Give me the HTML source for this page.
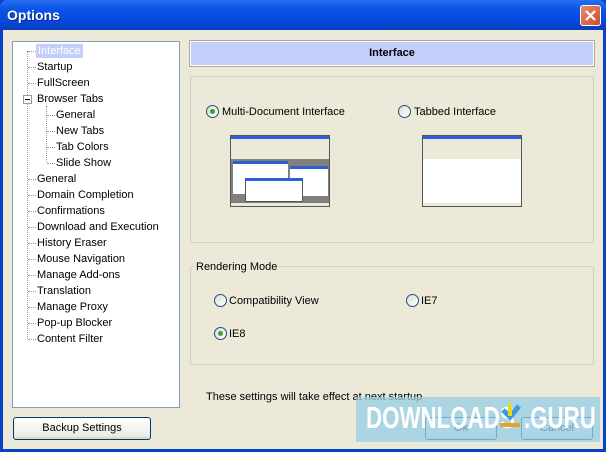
<!DOCTYPE html>
<html><head><style>
*{margin:0;padding:0;box-sizing:border-box}
body{width:606px;height:452px;overflow:hidden;background:#0841c6;font-family:"Liberation Sans",sans-serif;font-size:11px;color:#000;position:relative}
.a{position:absolute}
#title{left:0;top:0;width:606px;height:30px;background:linear-gradient(#2a6ef0,#0a55e6 30%,#0546d8 80%,#0a3cb8);border-radius:7px 7px 0 0}
#title span{position:absolute;left:7px;top:7px;color:#fff;font-weight:bold;font-size:14px;text-shadow:1px 1px #0a2a80}
#close{left:580px;top:5px;width:21px;height:21px;background:linear-gradient(135deg,#e88a6c,#c9502c);border:1px solid #fff;border-radius:3px}
#body{left:3px;top:30px;width:600px;height:419px;background:#ece9d8}
#tree{left:12px;top:41px;width:168px;height:367px;background:#fff;border:1px solid #7f9db9}
.t{position:absolute;white-space:nowrap;line-height:14px}
.dot{position:absolute;border-top:1px dotted #999;height:0}
.vdot{position:absolute;border-left:1px dotted #999;width:0}
#hdr{left:190px;top:41px;width:404px;height:25px;background:#c3cef9;border:1px solid #fff;outline:1px solid #aca899;text-align:center;font-weight:bold;line-height:23px}
.grp{border:1px solid #d0d0bf;border-radius:2px}
.r{position:absolute;width:13px;height:13px;border-radius:50%;border:1px solid #1c5180;background:linear-gradient(135deg,#dcdcd6,#fff)}
.r.on::after{content:"";position:absolute;left:3px;top:3px;width:5px;height:5px;border-radius:50%;background:#3ea12f}
.btn{position:absolute;height:23px;border:1px solid #003c74;border-radius:3px;background:linear-gradient(#fff,#ecebe6 85%,#d6d0c5);text-align:center;line-height:21px}
.shot{position:absolute;width:100px;height:72px;border:1px solid #555;background:#fff}
.wm{position:absolute;white-space:nowrap;color:#fff;font-weight:bold;font-size:31px;line-height:34px;transform:scaleX(0.72);transform-origin:0 0}
</style></head><body>
<div id="title" class="a"><span>Options</span></div>
<div id="close" class="a"><svg width="19" height="19"><path d="M5 5L14 14M14 5L5 14" stroke="#fff" stroke-width="2.2"/></svg></div>
<div id="body" class="a"></div>

<div id="tree" class="a">
<div class="vdot" style="left:14px;top:9px;height:288px"></div>
<div class="vdot" style="left:33px;top:64px;height:56px"></div>
<div class="t" style="left:23px;top:2px;background:#c3cef9;color:#fff;padding:0 2px">Interface</div>
<div class="dot" style="left:15px;top:9px;width:8px"></div>
<div class="t" style="left:24px;top:18px">Startup</div><div class="dot" style="left:15px;top:25px;width:8px"></div>
<div class="t" style="left:24px;top:34px">FullScreen</div><div class="dot" style="left:15px;top:41px;width:8px"></div>
<div class="a" style="left:10px;top:53px;width:9px;height:9px;border:1px solid #919b9c;background:#fff"><div class="a" style="left:1px;top:3px;width:5px;height:1px;background:#000"></div></div>
<div class="t" style="left:24px;top:50px">Browser Tabs</div>
<div class="t" style="left:43px;top:66px">General</div><div class="dot" style="left:34px;top:73px;width:8px"></div>
<div class="t" style="left:43px;top:82px">New Tabs</div><div class="dot" style="left:34px;top:89px;width:8px"></div>
<div class="t" style="left:43px;top:98px">Tab Colors</div><div class="dot" style="left:34px;top:105px;width:8px"></div>
<div class="t" style="left:43px;top:114px">Slide Show</div><div class="dot" style="left:34px;top:121px;width:8px"></div>
<div class="t" style="left:24px;top:130px">General</div><div class="dot" style="left:15px;top:137px;width:8px"></div>
<div class="t" style="left:24px;top:146px">Domain Completion</div><div class="dot" style="left:15px;top:153px;width:8px"></div>
<div class="t" style="left:24px;top:162px">Confirmations</div><div class="dot" style="left:15px;top:169px;width:8px"></div>
<div class="t" style="left:24px;top:178px">Download and Execution</div><div class="dot" style="left:15px;top:185px;width:8px"></div>
<div class="t" style="left:24px;top:194px">History Eraser</div><div class="dot" style="left:15px;top:201px;width:8px"></div>
<div class="t" style="left:24px;top:210px">Mouse Navigation</div><div class="dot" style="left:15px;top:217px;width:8px"></div>
<div class="t" style="left:24px;top:226px">Manage Add-ons</div><div class="dot" style="left:15px;top:233px;width:8px"></div>
<div class="t" style="left:24px;top:242px">Translation</div><div class="dot" style="left:15px;top:249px;width:8px"></div>
<div class="t" style="left:24px;top:258px">Manage Proxy</div><div class="dot" style="left:15px;top:265px;width:8px"></div>
<div class="t" style="left:24px;top:274px">Pop-up Blocker</div><div class="dot" style="left:15px;top:281px;width:8px"></div>
<div class="t" style="left:24px;top:290px">Content Filter</div><div class="dot" style="left:15px;top:297px;width:8px"></div>
</div>

<div id="hdr" class="a">Interface</div>

<div class="a grp" style="left:190px;top:76px;width:404px;height:167px"></div>
<div class="r on" style="left:206px;top:105px"></div><div class="t" style="left:222px;top:105px">Multi-Document Interface</div>
<div class="r" style="left:398px;top:105px"></div><div class="t" style="left:414px;top:105px">Tabbed Interface</div>
<div class="shot" style="left:230px;top:135px;background:#808080">
<div class="a" style="left:0;top:0;width:98px;height:3px;background:#2a5fd8"></div>
<div class="a" style="left:0;top:3px;width:98px;height:20px;background:#ece9d8"></div>
<div class="a" style="left:2px;top:25px;width:55px;height:33px;background:#fff;border-top:3px solid #2a5fd8"></div>
<div class="a" style="left:59px;top:30px;width:38px;height:30px;background:#fff;border-top:3px solid #2a5fd8"></div>
<div class="a" style="left:14px;top:42px;width:58px;height:24px;background:#fff;border:1px solid #555;border-top:3px solid #2a5fd8"></div>
<div class="a" style="left:0;top:67px;width:98px;height:3px;background:#ece9d8"></div>
</div>
<div class="shot" style="left:422px;top:135px">
<div class="a" style="left:0;top:0;width:98px;height:3px;background:#2a5fd8"></div>
<div class="a" style="left:0;top:3px;width:98px;height:20px;background:#ece9d8"></div>
<div class="a" style="left:0;top:67px;width:98px;height:3px;background:#ece9d8"></div>
</div>

<div class="a grp" style="left:190px;top:266px;width:404px;height:99px"></div>
<div class="t" style="left:194px;top:260px;background:#ece9d8;padding:0 2px">Rendering Mode</div>
<div class="r" style="left:214px;top:294px"></div><div class="t" style="left:229px;top:294px">Compatibility View</div>
<div class="r" style="left:406px;top:294px"></div><div class="t" style="left:421px;top:294px">IE7</div>
<div class="r on" style="left:214px;top:327px"></div><div class="t" style="left:229px;top:327px">IE8</div>

<div class="t" style="left:206px;top:390px">These settings will take effect at next startup</div>

<div class="btn" style="left:13px;top:417px;width:138px">Backup Settings</div>
<div class="btn" style="left:425px;top:417px;width:72px">Ok</div>
<div class="btn" style="left:521px;top:417px;width:72px">Cancel</div>

<div class="a" style="left:356px;top:397px;width:244px;height:45px;background:rgba(150,205,230,0.75)"></div>
<div class="wm" style="left:366px;top:401px">DOWNLOADS</div>
<svg class="a" style="left:498px;top:401px" width="26" height="30"><path d="M5 9L12 16L21 5" stroke="#3b9ad8" stroke-width="5" fill="none"/><path d="M12 2V15" stroke="#e8d82c" stroke-width="4"/><rect x="2" y="22" width="20" height="4" fill="#f0a020"/></svg>
<div class="wm" style="left:524px;top:401px">.GURU</div>
</body></html>
